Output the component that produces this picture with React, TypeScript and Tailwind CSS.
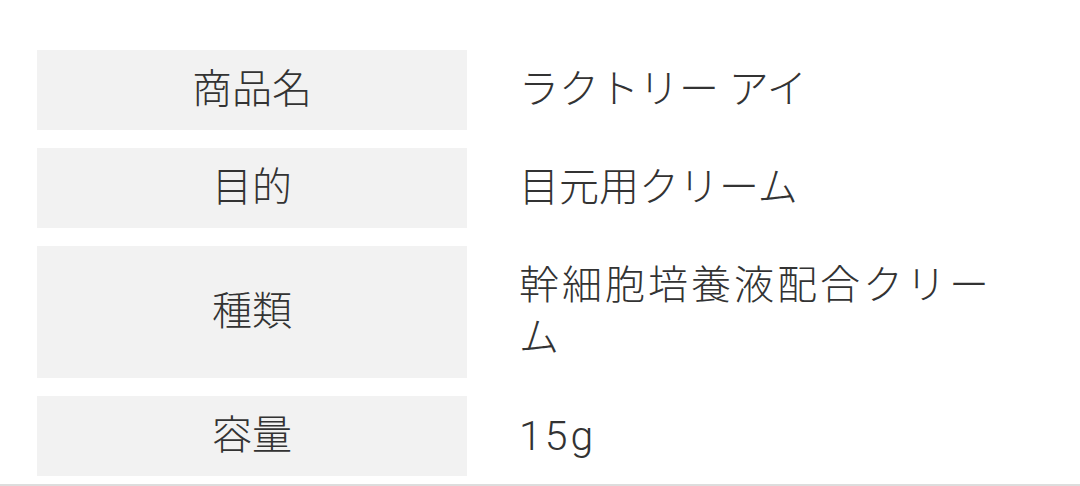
const rows: { label: string; value: string; latin?: boolean }[] = [
  { label: "商品名", value: "ラクトリー アイ" },
  { label: "目的", value: "目元用クリーム" },
  { label: "種類", value: "幹細胞培養液配合クリーム" },
  { label: "容量", value: "15g", latin: true },
];

export default function App() {
  return (
    <div
      className="w-[1080px] h-[486px] bg-white text-[#333333] font-light overflow-hidden flex flex-col"
      style={{ fontFamily: 'Roboto, "Noto Sans CJK JP", sans-serif' }}
    >
      <div className="flex flex-col gap-[18px] pt-[50px] px-[37px]">
        {rows.map((row) => (
          <div key={row.label} className="flex">
            <div className="w-[430px] shrink-0 bg-[#f2f2f2] flex items-center justify-center py-[14px] text-[40px] leading-[52px]">
              {row.label}
            </div>
            <div className="pl-[52px] py-[14px]">
              <p
                className={`w-[470px] text-[40px] leading-[52px] text-justify ${
                  row.latin ? "tracking-[3px] text-[41px]" : ""
                }`}
              >
                {row.value}
              </p>
            </div>
          </div>
        ))}
      </div>
      <div className="mt-auto h-[2px] bg-[#dddddd]" />
    </div>
  );
}
